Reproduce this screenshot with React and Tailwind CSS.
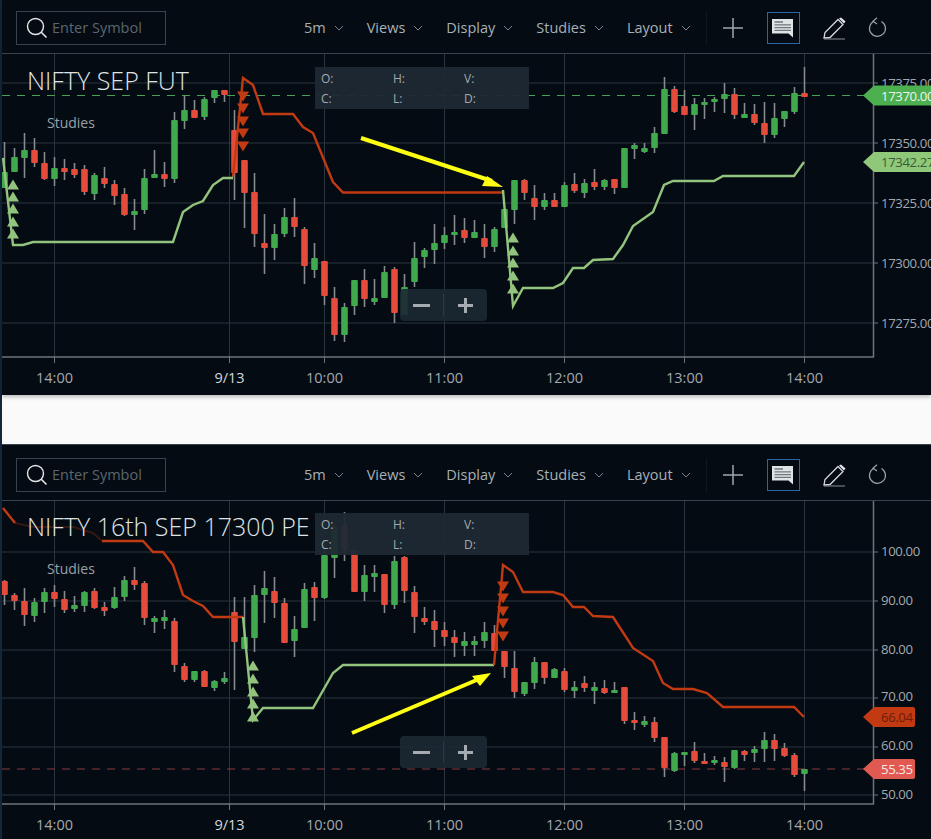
import React from "react";

const GRID = "#2a353f";
const AXIS = "#6d747a";
const LABEL = "#a3a9ae";
const TIME_X = [54.5, 229.5, 324.5, 444.5, 564.5, 684.5, 804.5];
const TIME_LABELS = ["14:00", "9/13", "10:00", "11:00", "12:00", "13:00", "14:00"];

// [high, bodyTop, bodyBottom, low, up?] one candle every 10px starting at x=4.5
const topCandles = [
  [142, 172, 188, 188, 1], [148, 157, 172, 172, 1], [133, 150, 158, 178, 1], [138, 150, 163, 167, 0],
  [152, 163, 179, 180, 0], [157, 168, 179, 186, 1], [159, 168, 172, 180, 0], [163, 169, 175, 178, 0],
  [165, 169, 192, 195, 0], [173, 175, 194, 200, 1], [167, 178, 184, 188, 0], [180, 184, 196, 205, 0],
  [188, 194, 215, 216, 0], [199, 211, 215, 230, 1], [169, 178, 210, 214, 1], [150, 174, 178, 178, 1],
  [162, 174, 179, 187, 0], [112, 120, 179, 183, 1], [96, 110, 121, 129, 1], [100, 110, 118, 118, 0],
  [97, 99, 117, 120, 1], [90, 90, 98, 103, 1], [90, 90, 95, 102, 0], [110, 130, 173, 200, 0],
  [160, 160, 193, 228, 0], [173, 192, 234, 247, 0], [214, 243, 248, 274, 0], [224, 234, 248, 260, 1],
  [208, 217, 234, 237, 1], [198, 217, 227, 237, 0], [227, 229, 266, 284, 0], [243, 258, 270, 278, 1],
  [261, 261, 296, 305, 0], [287, 298, 335, 341, 0], [303, 307, 335, 342, 1], [280, 280, 306, 315, 1],
  [269, 280, 299, 307, 0], [279, 298, 302, 305, 1], [266, 272, 298, 298, 1], [267, 269, 313, 323, 0],
  [274, 287, 315, 315, 1], [242, 258, 282, 287, 1], [248, 250, 257, 268, 1], [224, 243, 250, 264, 1],
  [227, 235, 243, 249, 1], [215, 232, 235, 245, 1], [218, 230, 238, 243, 0], [220, 232, 238, 238, 1],
  [224, 238, 247, 258, 0], [227, 229, 247, 252, 1], [209, 209, 228, 228, 1], [180, 180, 210, 224, 1],
  [179, 180, 193, 200, 0], [185, 198, 207, 220, 0], [193, 200, 207, 210, 1], [193, 200, 207, 207, 0],
  [182, 185, 207, 207, 1], [173, 184, 191, 193, 0], [179, 183, 193, 198, 1], [169, 182, 187, 190, 0],
  [179, 180, 187, 190, 1], [179, 179, 188, 194, 0], [148, 148, 188, 188, 1], [143, 145, 149, 159, 1],
  [143, 148, 152, 153, 1], [127, 133, 148, 153, 1], [77, 89, 134, 134, 1], [86, 89, 112, 113, 0],
  [90, 106, 115, 115, 0], [98, 104, 115, 130, 1], [98, 102, 105, 119, 1], [97, 99, 102, 112, 1],
  [83, 94, 99, 113, 1], [88, 94, 115, 119, 0], [103, 114, 118, 118, 1], [104, 114, 123, 125, 0],
  [102, 123, 135, 143, 0], [103, 118, 135, 138, 1], [111, 111, 119, 127, 1], [87, 93, 112, 114, 1],
  [67, 93, 97, 97, 0],
];

const bottomCandles = [
  [580, 581, 595, 605, 0], [593, 595, 601, 610, 0], [588, 601, 615, 626, 0], [598, 602, 616, 622, 1],
  [588, 592, 602, 613, 1], [585, 592, 599, 607, 0], [591, 599, 610, 613, 0], [596, 605, 609, 612, 1],
  [591, 592, 606, 612, 1], [588, 591, 608, 609, 0], [602, 607, 611, 616, 0], [587, 597, 608, 609, 1],
  [576, 580, 597, 601, 1], [567, 580, 585, 590, 0], [581, 583, 618, 625, 0], [616, 618, 622, 633, 1],
  [610, 617, 621, 629, 1], [618, 621, 665, 672, 0], [663, 666, 680, 682, 0], [671, 671, 680, 682, 1],
  [670, 671, 687, 687, 0], [680, 681, 688, 691, 1], [672, 678, 682, 684, 1], [597, 612, 642, 690, 0],
  [597, 637, 649, 649, 1], [585, 595, 638, 652, 1], [571, 588, 595, 623, 1], [577, 591, 603, 618, 0],
  [598, 603, 643, 643, 0], [616, 629, 641, 657, 1], [583, 589, 628, 628, 1], [582, 587, 598, 621, 0],
  [548, 555, 598, 599, 1], [525, 527, 558, 578, 1], [512, 525, 550, 561, 0], [550, 550, 592, 592, 0],
  [565, 575, 592, 601, 1], [565, 573, 577, 592, 1], [574, 574, 605, 613, 0], [556, 561, 605, 609, 1],
  [556, 557, 591, 603, 0], [586, 592, 617, 633, 0], [607, 618, 622, 625, 0], [610, 621, 630, 647, 0],
  [622, 630, 637, 646, 0], [630, 637, 643, 657, 0], [632, 641, 646, 656, 1], [636, 641, 645, 656, 1],
  [622, 632, 641, 648, 1], [625, 633, 651, 651, 0], [651, 651, 667, 678, 0], [651, 668, 692, 698, 0],
  [682, 682, 694, 696, 1], [657, 662, 683, 689, 1], [662, 662, 678, 684, 0], [668, 669, 678, 678, 1],
  [668, 671, 690, 692, 0], [681, 687, 691, 698, 1], [676, 683, 688, 692, 0], [682, 687, 691, 704, 1],
  [680, 688, 693, 694, 0], [682, 690, 693, 693, 1], [687, 687, 721, 724, 0], [712, 720, 723, 730, 0],
  [716, 721, 725, 727, 1], [717, 722, 738, 742, 0], [737, 737, 768, 777, 0], [752, 753, 771, 772, 1],
  [752, 752, 755, 766, 1], [742, 751, 761, 763, 0], [753, 761, 764, 764, 0], [756, 760, 763, 765, 1],
  [757, 762, 767, 782, 0], [750, 750, 768, 769, 1], [750, 751, 755, 761, 0], [746, 749, 753, 762, 1],
  [732, 740, 749, 762, 1], [734, 740, 749, 761, 0], [743, 748, 756, 757, 0], [753, 755, 775, 777, 0],
  [769, 769, 774, 791, 1],
];

function Candles({ data }) {
  return data.map(([hi, top, bot, lo, up], i) => {
    const x = 4.5 + i * 10;
    return (
      <g key={i}>
        <line x1={x} x2={x} y1={hi} y2={lo} stroke="#868b90" strokeWidth="1.6" />
        <rect x={x - 3.3} y={top} width="6.6" height={bot - top} rx="1" fill={up ? "#41a94d" : "#e44b3a"} />
      </g>
    );
  });
}

function Triangles({ x, ys, up, color }) {
  return ys.map((y) => (
    <polygon
      key={y}
      points={up ? `${x},${y - 0.5} ${x + 6},${y + 9.5} ${x - 6},${y + 9.5}` : `${x - 6},${y - 0.5} ${x + 6},${y - 0.5} ${x},${y + 9.5}`}
      fill={color}
    />
  ));
}

function Grid({ top, bottom, ys }) {
  return (
    <>
      {ys.map((y) => (
        <line key={y} x1="2" x2="874" y1={y} y2={y} stroke={GRID} />
      ))}
      {TIME_X.map((x) => (
        <line key={x} x1={x} x2={x} y1={top} y2={bottom} stroke={GRID} />
      ))}
      <line x1="2" x2="874" y1={bottom} y2={bottom} stroke={AXIS} strokeWidth="1.5" />
      <line x1="873.5" x2="873.5" y1={top} y2={bottom} stroke={AXIS} strokeWidth="1.5" />
      {TIME_X.map((x) => (
        <line key={x} x1={x} x2={x} y1={bottom} y2={bottom + 6} stroke={AXIS} />
      ))}
      {ys.map((y) => (
        <line key={y} x1="874" x2="878" y1={y} y2={y} stroke={AXIS} />
      ))}
      {TIME_X.map((x, i) => (
        <text key={x} x={x} y={bottom + 26} textAnchor="middle" fontSize="14.5" fill={i === 1 ? "#d5d8da" : LABEL}>
          {TIME_LABELS[i]}
        </text>
      ))}
    </>
  );
}

function AxisLabel({ y, color = LABEL, children }) {
  return (
    <text x="881" y={y} fontSize="13.2" letterSpacing="-0.4" fill={color}>
      {children}
    </text>
  );
}

function PriceTag({ y, color, text, textColor, right = 945 }) {
  return (
    <>
      <path
        d={`M863 ${y} L874 ${y - 10} H${right - 2} Q${right} ${y - 10} ${right} ${y - 8} V${y + 8} Q${right} ${y + 10} ${right - 2} ${y + 10} H874 Z`}
        fill={color}
      />
      <AxisLabel y={y + 5} color={textColor}>{text}</AxisLabel>
    </>
  );
}

function Chevron() {
  return (
    <svg width="10" height="6" viewBox="0 0 10 6" className="ml-[8px]">
      <path d="M1 1 L5 5 L9 1" fill="none" stroke="#79828a" strokeWidth="1" />
    </svg>
  );
}

function MenuItem({ label }) {
  return (
    <div className="flex items-center text-[14.5px] text-[#a9b0b6]">
      {label}
      <Chevron />
    </div>
  );
}

function Toolbar() {
  return (
    <div className="flex items-center h-[54px] pt-[3px] border-b border-[#39434d] pl-[14px]">
      <div className="flex items-center w-[150px] h-[34px] border border-[#39434d] pl-[9px]">
        <svg width="22" height="22" viewBox="0 0 22 22">
          <circle cx="9.5" cy="9.5" r="8" fill="none" stroke="#e4e7e9" strokeWidth="1.4" />
          <path d="M15 15 L20.5 20.5" stroke="#e4e7e9" strokeWidth="1.6" />
        </svg>
        <span className="ml-[4px] text-[14.5px] text-[#5d656d]">Enter Symbol</span>
      </div>
      <div className="flex items-center gap-[23px] ml-[138px]">
        <MenuItem label="5m" />
        <MenuItem label="Views" />
        <MenuItem label="Display" />
        <MenuItem label="Studies" />
        <MenuItem label="Layout" />
      </div>
      <div className="w-px h-[34px] bg-[#10171f] ml-[15px]" />
      <svg width="20" height="20" viewBox="0 0 20 20" className="ml-[16px]">
        <path d="M10 0 V20 M0 10 H20" stroke="#a0a7ad" strokeWidth="1.5" />
      </svg>
      <div className="flex items-center justify-center w-[33px] h-[32px] border border-[#2d65a8] ml-[24px]">
        <svg width="22" height="19" viewBox="0 0 22 19">
          <path d="M0 0 H21 V18.5 L16.5 14.5 H0 Z" fill="#dfe3e6" />
          <path d="M2.5 3 H11 M2.5 5.8 H19 M2.5 8.6 H19 M2.5 11.4 H19" stroke="#6f777e" strokeWidth="1.3" />
        </svg>
      </div>
      <svg width="24" height="23" viewBox="0 0 24 23" className="ml-[23px]">
        <path d="M1 21 L2 15.5 L15 2.5 L20 7.5 L7 20.5 Z" fill="none" stroke="#d5d9dc" strokeWidth="1.3" />
        <path d="M16 1.5 L18 0.5 L22.5 4.5 L21 6.5 Z" fill="#e4e7e9" />
        <path d="M1 22 H22" stroke="#8b9298" strokeWidth="1" />
      </svg>
      <svg width="20" height="22" viewBox="0 0 20 22" className="ml-[21px]">
        <path d="M13.5 4.5 A8 8 0 1 1 6 4.2" fill="none" stroke="#9ca3a9" strokeWidth="1.2" />
        <path d="M9 0.8 L5 4.2 L9 7" fill="none" stroke="#9ca3a9" strokeWidth="1.2" />
      </svg>
    </div>
  );
}

function LegendBox({ className }) {
  return (
    <div className={`absolute left-[313px] w-[214px] h-[42px] bg-[#1d2933]/95 grid grid-cols-[72px_71px_auto] grid-rows-2 items-center pl-[6px] pt-[2px] text-[12px] text-[#a3a9ae] ${className}`}>
      <span>O:</span>
      <span>H:</span>
      <span>V:</span>
      <span>C:</span>
      <span>L:</span>
      <span>D:</span>
    </div>
  );
}

function ZoomControl({ className }) {
  return (
    <div className={`absolute left-[398px] w-[87px] h-[32px] rounded bg-[#1c2833]/90 flex items-center ${className}`}>
      <div className="flex-1 flex items-center justify-center border-r border-[#2c3843] h-[22px]">
        <div className="w-[17px] h-[3px] bg-[#a5abb0]" />
      </div>
      <div className="flex-1 flex items-center justify-center">
        <svg width="15" height="15" viewBox="0 0 15 15">
          <path d="M7.5 0 V15 M0 7.5 H15" stroke="#a5abb0" strokeWidth="3" />
        </svg>
      </div>
    </div>
  );
}

function Title({ text, className }) {
  return <div className={`absolute left-[25px] text-[25px] font-light leading-none text-[#dfe3e6] whitespace-nowrap ${className}`}>{text}</div>;
}

function Studies({ className }) {
  return <div className={`absolute left-[45px] text-[14px] leading-none text-[#9aa1a6] ${className}`}>Studies</div>;
}

function TopChart() {
  return (
    <svg viewBox="2 54 929 341" className="block w-[929px] h-[341px]">
      <Grid top={54} bottom={357} ys={[83, 143, 203, 263, 323]} />
      {[["17375.00", 88], ["17350.00", 148], ["17325.00", 208], ["17300.00", 268], ["17275.00", 328]].map(([t, y]) => (
        <AxisLabel key={t} y={y}>{t}</AxisLabel>
      ))}
      <line x1="2" x2="864" y1="95.5" y2="95.5" stroke="#46a058" strokeDasharray="8 7" />
      <Candles data={topCandles} />
      <polyline points="233,177 243,78 253,85 263,114 293,114 303,127 313,133 333,182 343,192.5 503,192.5" fill="none" stroke="#c23a12" strokeWidth="2.4" />
      <polyline points="3,158 13,245 23,245 33,242 173,242 183,212 193,205 203,201 213,185 223,178 233,178" fill="none" stroke="#93c47d" strokeWidth="2.4" />
      <polyline points="503,190 513,306 523,288 553,288 563,283 573,268 584,268 593,260 613,259 623,245 633,226 653,212 664,185 673,181 714,181 723,176 794,176 804,162" fill="none" stroke="#93c47d" strokeWidth="2.4" />
      <Triangles x={243} ys={[92, 104, 117, 129, 142]} color="#c23a12" />
      <Triangles x={13} ys={[180, 192, 204, 217, 229]} up color="#93c47d" />
      <Triangles x={513} ys={[233, 246, 258, 271, 284]} up color="#93c47d" />
      <path d="M361 138 L492 181" stroke="#ffff12" strokeWidth="4" />
      <polygon points="503,187 487,176 482,186" fill="#ffff12" />
      <PriceTag y={95.5} color="#4caf50" text="17370.00" textColor="#f0f5f0" />
      <PriceTag y={162} color="#8fc878" text="17342.27" textColor="#3d5a38" />
    </svg>
  );
}

function BottomChart() {
  return (
    <svg viewBox="2 501 929 338" className="block w-[929px] h-[338px]">
      <Grid top={501} bottom={804} ys={[552, 601, 650, 698, 747, 795]} />
      {[["100.00", 556], ["90.00", 605], ["80.00", 654], ["70.00", 701], ["60.00", 750], ["50.00", 799]].map(([t, y]) => (
        <AxisLabel key={t} y={y}>{t}</AxisLabel>
      ))}
      <line x1="2" x2="864" y1="769" y2="769" stroke="#8a3a40" strokeDasharray="8 7" />
      <Candles data={bottomCandles} />
      <polyline points="3,508 15,523" fill="none" stroke="#c23a12" strokeWidth="2.4" />
      <polyline points="15,523 33,527 73,527 93,533 102,541" fill="none" stroke="#c23a12" strokeWidth="2" opacity="0.25" />
      <polyline points="102,541 143,541 153,552 163,552 173,565 183,595 193,601 203,606 213,617 243,617" fill="none" stroke="#c23a12" strokeWidth="2.4" />
      <polyline points="243,617 253,720 263,708 313,708 333,673 343,665 494,665" fill="none" stroke="#93c47d" strokeWidth="2.4" />
      <polyline points="494,665 503,565 513,572 523,592 553,592 563,595 573,607 584,607 593,616 613,617 633,648 653,661 663,683 673,689 693,689 707,693 723,707 794,707 804,717" fill="none" stroke="#c23a12" strokeWidth="2.4" />
      <Triangles x={503} ys={[582, 594, 607, 619, 632]} color="#c23a12" />
      <Triangles x={253} ys={[661, 674, 687, 699, 712]} up color="#93c47d" />
      <path d="M352 733 L479 679" stroke="#ffff12" strokeWidth="4" />
      <polygon points="491,673 472,676 480,686" fill="#ffff12" />
      <PriceTag y={717} color="#c23a12" text="66.04" textColor="#6d1d08" right={915} />
      <PriceTag y={769} color="#e05a52" text="55.35" textColor="#f7e8e6" right={915} />
    </svg>
  );
}

export default function App() {
  return (
    <div className="flex w-[931px] h-[839px] overflow-hidden bg-[#fafafa] font-['Open_Sans',sans-serif]">
      <div className="w-[2px] bg-[#14263a] shrink-0" />
      <div className="w-[929px]">
        <section className="relative h-[395px] bg-[#040b13] shadow-[0_2px_4px_rgba(0,0,0,0.25)]">
          <Toolbar />
          <TopChart />
          <Title text="NIFTY SEP FUT" className="top-[68px]" />
          <Studies className="top-[116px]" />
          <LegendBox className="top-[67px]" />
          <ZoomControl className="top-[289px]" />
        </section>
        <div className="h-[49px]" />
        <section className="relative h-[395px] bg-[#040b13] border-t border-[#39434d]">
          <div className="h-[2px]" />
          <Toolbar />
          <BottomChart />
          <Title text="NIFTY 16th SEP 17300 PE" className="top-[69px]" />
          <Studies className="top-[117px]" />
          <LegendBox className="top-[68px]" />
          <ZoomControl className="top-[291px]" />
        </section>
      </div>
    </div>
  );
}
